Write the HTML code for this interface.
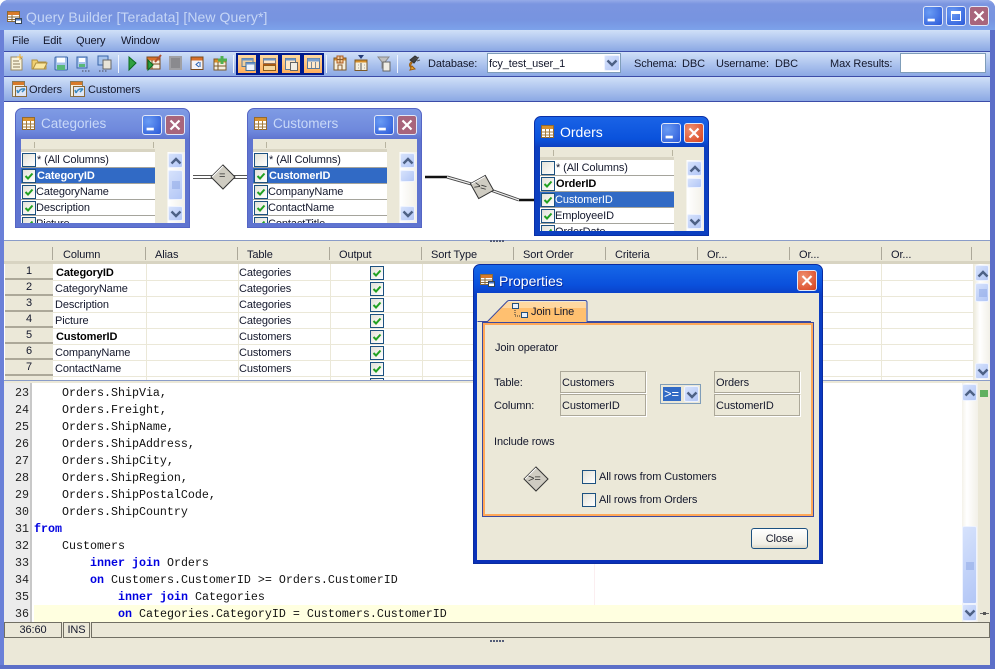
<!DOCTYPE html>
<html><head><meta charset="utf-8"><title>Query Builder</title>
<style>
html,body{margin:0;padding:0;width:995px;height:669px;overflow:hidden;background:#fff}
body{position:relative;font:11px/18px "Liberation Sans",sans-serif;color:#14182c;letter-spacing:-.1px}
div,span,svg{position:absolute;box-sizing:border-box}
span{white-space:nowrap}
.bar{left:4px;width:986px;background:linear-gradient(#d0e0f8,#8ba8e4)}
.tb{width:22px;height:22px;top:53px;background:linear-gradient(#ffd9a0,#ffaf5c);border:2px solid #001a8c}
.sep{width:1px;top:55px;height:18px;background:#f0f5ff;border-left:1px solid #8aa0d8}
.w{width:175px;height:120px;border-radius:7px 7px 0 0;background:linear-gradient(#7f9be4 0,#6e88dc 22px,#5f74d0 30px);border:1px solid #5565c4}
.w.a{background:linear-gradient(#1a63e6 0,#0a52dc 22px,#0c3fc0 30px);border-color:#0a30a8}
.w .ti{left:25px;top:6px;font-size:13.5px;line-height:18px;color:#c8d8f8;letter-spacing:0}
.w.a .ti{color:#fff;left:25px;font-size:14px}
.in{left:5px;top:30px;width:164px;height:84px;background:#ebe8d8;overflow:hidden}
.hd{left:0;top:0;width:134px;height:13px;border-bottom:3px solid #d8d4c2}
.hd:before{content:"";position:absolute;left:13px;top:3px;height:6px;width:1px;background:#b8b4a0}
.hd:after{content:"";position:absolute;left:132px;top:3px;height:6px;width:1px;background:#b8b4a0}
.r{left:0;width:134px;height:16px;background:#fff;border-bottom:1px solid #a5a49c}
.r span{left:15px;top:-1px}
.r.s{background:#316ac5}.r.s span{color:#fff}
.sb{left:134px;top:13px;width:30px;height:71px;background:linear-gradient(90deg,#ebe8d8 0,#ebe8d8 12px,#fff 13px,#f2f0e8 30px)}
.cb{width:14px;height:14px;border:1px solid #1c5180;background:linear-gradient(135deg,#e4e2d8,#fff)}
.cb svg{left:1px;top:1px}
.btn{border:1px solid #eef3ff;border-radius:2px;background:linear-gradient(135deg,#d6e2fc,#b2c6f6);outline:0}
.wb{width:20px;height:20px;border:1px solid #e2e8f8;border-radius:3px}
.blue{background:radial-gradient(circle at 30% 30%,#6a9cf4,#2a58d8)}
.red{background:#a8657c}
.redA{background:radial-gradient(circle at 30% 30%,#ee9070,#d8401c)}
.th{top:246px;height:16px}
.hdv{top:247px;width:1px;height:13px;background:#aca899}
.g{left:5px;width:968px;height:1px;background:#ebe8d8}
.v{top:264px;width:1px;height:116px;background:#ebe8d8}
.n{left:5px;width:48px;height:16px;background:#ebe8d8;border-bottom:2px solid #aca899;text-align:center;line-height:15px}
.c{height:16px}
.ln{left:5px;width:24px;text-align:right;font:11.67px/19px "Liberation Mono",monospace;color:#222;letter-spacing:0}
.co{font:11.67px/19px "Liberation Mono",monospace;color:#111;white-space:pre;letter-spacing:0}
.k{position:static;color:#0000e0;font-weight:bold}
.fd{width:86px;height:22px;border:1px solid #aca899;box-shadow:1px 1px 0 #fff;padding-left:1px;line-height:22px;background:#ebe8d8}
.fd span{position:static}
.st{top:622px;height:16px;border:1px solid #716f64;background:#ebe8d8;text-align:center;line-height:15px}
.dot{width:2px;height:2px;background:#555e78}
</style></head><body>
<svg width="0" height="0" style="position:absolute">
<defs>
<symbol id="chk" viewBox="0 0 10 10"><path d="M1.5 5l2.5 2.5L8.5 2.5" fill="none" stroke="#21a121" stroke-width="2"/></symbol>
<symbol id="up" viewBox="0 0 14 14"><path d="M2.500 9.500l4.500-4.500 4.500 4.500" fill="none" stroke="#4d6185" stroke-width="2.400"/></symbol>
<symbol id="dn" viewBox="0 0 14 14"><path d="M2.500 4.500l4.500 4.500 4.500-4.500" fill="none" stroke="#4d6185" stroke-width="2.400"/></symbol>
<symbol id="x" viewBox="0 0 20 20"><path d="M5 5l10 10M15 5L5 15" stroke="#fff" stroke-width="2.4"/></symbol>
<symbol id="min" viewBox="0 0 20 20"><rect x="4" y="13" width="8" height="3" fill="#fff"/></symbol>
<symbol id="tbl" viewBox="0 0 14 14"><rect x=".5" y=".5" width="12" height="12" fill="#fff" stroke="#946a2e"/><rect x="1" y="1" width="11" height="3" fill="#d8922e"/><path d="M.5 7h12M.5 10h12M4.5 4v9M8.5 4v9" stroke="#a67c3c"/></symbol>
<symbol id="app" viewBox="0 0 16 16"><rect x=".5" y="1.5" width="12" height="10" fill="#fff" stroke="#8a6a3a"/><rect x="1" y="2" width="11" height="3" fill="#d87a2a"/><path d="M1 7h11M1 9.500h11M5 5v6" stroke="#8a6a3a"/><rect x="8.500" y="8.500" width="6" height="5" fill="#fff" stroke="#345"/><rect x="9" y="9" width="5" height="1.500" fill="#4a78c8"/></symbol>
<symbol id="ref" viewBox="0 0 18 18"><rect x="2.500" y="1.500" width="12" height="15" fill="#f4efe0" stroke="#8a7a5a"/><rect x="3" y="2" width="11" height="3" fill="#d87a2a"/><rect x="5.500" y="6.500" width="11" height="10" fill="#dfe6f5" stroke="#8a6a3a"/><path d="M8 13q2-5 7-4M8 13l-1-3M15 9l-3 3" fill="none" stroke="#3a8ac0" stroke-width="1.500"/></symbol>
<symbol id="dia" viewBox="0 0 26 26"><path d="M13 1l12 12-12 12L1 13z" fill="#cfccc2" stroke="#333"/><path d="M13 2L2 13" stroke="#fff" fill="none"/></symbol>
</defs></svg>

<!-- window frame -->
<div style="left:0;top:0;width:995px;height:669px;background:#6a80d8;border-radius:8px 8px 0 0"></div>
<div style="left:0;top:0;width:995px;height:30px;border-radius:8px 8px 0 0;background:linear-gradient(#95abe8 0,#7b95e0 4px,#7794e0 20px,#7ca2ea 30px)"></div>
<div style="left:990px;top:30px;width:5px;height:639px;background:#5c6fc8"></div>
<div style="left:0;top:665px;width:995px;height:4px;background:#5c6fc8"></div>

<svg style="left:7px;top:10px" width="16" height="16"><use href="#app"/></svg>
<span style="left:26px;top:8px;font-size:14px;line-height:18px;color:#c6d6f6;letter-spacing:.07px">Query Builder [Teradata] [New Query*]</span>
<div class="wb blue" style="left:923px;top:6px"><svg style="left:0;top:0" width="18" height="18" viewBox="0 0 20 20"><use href="#min"/></svg></div>
<div class="wb blue" style="left:946px;top:6px"><div style="left:4px;top:4px;width:10px;height:10px;border:1px solid #fff;border-top:3px solid #fff"></div></div>
<div class="wb red" style="left:969px;top:6px"><svg style="left:0;top:0" width="18" height="18"><use href="#x"/></svg></div>

<!-- menu -->
<div class="bar" style="top:30px;height:21px"></div>
<span style="left:12px;top:32px">File</span><span style="left:43px;top:32px">Edit</span><span style="left:76px;top:32px">Query</span><span style="left:121px;top:32px">Window</span>
<div style="left:4px;top:51px;width:986px;height:1px;background:#3c4ca8"></div>

<!-- toolbar -->
<div class="bar" style="top:52px;height:24px"></div>
<div style="left:4px;top:76px;width:986px;height:1px;background:#3c4ca8"></div>
<div class="bar" style="top:77px;height:24px"></div>
<div style="left:4px;top:101px;width:986px;height:1px;background:#3c4ca8"></div>

<svg style="left:0;top:52px" width="430" height="24" viewBox="0 52 430 24">
<path d="M11 57h9l2 2v11H11z" fill="#f8f2da" stroke="#9a8a62"/><path d="M13 61h6M13 64h7M13 67h7" stroke="#8a7a5a"/><path d="M20 54v6M17 57h6" stroke="#f0b030"/>
<path d="M32 60h5l1 2h8v7H32z" fill="#f0d070" stroke="#b09040"/><path d="M33 69l3-6h11l-3 6z" fill="#fbe8a0" stroke="#b09040"/>
<rect x="55" y="57" width="12.500" height="13" rx="1" fill="#a8c4ec" stroke="#3864a8"/><rect x="57" y="57.500" width="8" height="5" fill="#fff"/><rect x="57" y="65" width="8" height="5" fill="#58b878"/>
<rect x="77" y="57" width="10" height="11" fill="#a8c4ec" stroke="#3864a8"/><rect x="79" y="58" width="6" height="4" fill="#fff"/><rect x="79" y="64" width="6" height="3" fill="#58b878"/><path d="M82 71h1.500M85 71h1.500M88 71h1.500" stroke="#445"/>
<rect x="98" y="56" width="10" height="9" fill="#a8c4ec" stroke="#3864a8"/><rect x="103" y="60" width="8" height="9" fill="#e8e4d8" stroke="#666"/><path d="M99 71h1.500M102 71h1.500M105 71h1.500" stroke="#445"/>
<rect x="118" y="55" width="1" height="18" fill="#f0f5ff"/>
<path d="M129 57l7 6-7 7z" fill="#30a040" stroke="#0a6a20"/>
<rect x="147" y="57" width="13" height="12" fill="#f4efe0" stroke="#7a4a1a"/><rect x="147.500" y="57.500" width="12" height="3" fill="#d8702a"/><path d="M147 64h13M152 60v9" stroke="#7a4a1a"/><path d="M148 60l5 5-5 5z" fill="#30a040" stroke="#0a6a20"/><path d="M155 62l6-7" stroke="#b05030" stroke-width="2"/>
<rect x="170" y="57" width="11" height="12" fill="#8a8a8e" stroke="#a0a0a4" stroke-width="2"/>
<rect x="191" y="57" width="12" height="12.500" fill="#f4f4f8" stroke="#7a4a1a"/><rect x="191.500" y="57.500" width="11" height="3" fill="#d8702a"/><path d="M199 62l-3 2.500 3 2.500M200 62v5" fill="none" stroke="#2860b0"/>
<rect x="214" y="59" width="12" height="11" fill="#f4efe0" stroke="#7a5a2a"/><rect x="214.500" y="59.500" width="11" height="3" fill="#d8902a"/><path d="M214 66h12M218 62v8" stroke="#7a5a2a"/><path d="M222 56v8M218 60h9" stroke="#50b050" stroke-width="3"/>
<rect x="233" y="55" width="1" height="18" fill="#f0f5ff"/>
</svg>
<div class="tb" style="left:236px"></div><div class="tb" style="left:258px"></div><div class="tb" style="left:280px"></div><div class="tb" style="left:302px"></div>
<svg style="left:236px;top:53px" width="90" height="22" viewBox="236 53 90 22">
<rect x="242" y="58.500" width="11" height="8" fill="#f0d0a0" stroke="#5a7a9a"/><rect x="242" y="58.500" width="11" height="2" fill="#6a94c8"/><rect x="246" y="62.500" width="9" height="8" fill="#f0f4fc" stroke="#3a6a98"/><rect x="246" y="62.500" width="9" height="2" fill="#6a94c8"/>
<rect x="263.500" y="58.500" width="12" height="5" fill="#ffe8c8" stroke="#8a7a70"/><rect x="263.500" y="58.500" width="12" height="2" fill="#6a94c8"/><rect x="263.500" y="65.500" width="12" height="5" fill="#f4d8a0" stroke="#8a5a1a"/><path d="M263 64.500h13" stroke="#b05a10" stroke-width="1.500"/>
<rect x="285.500" y="58.500" width="10" height="11" fill="#ffe8c8" stroke="#5a7a9a"/><rect x="285.500" y="58.500" width="10" height="2" fill="#6a94c8"/><rect x="290.500" y="62.500" width="7" height="8" fill="#f2efe6" stroke="#666"/>
<rect x="307.500" y="58.500" width="12" height="10" fill="#ffe8c8" stroke="#5a7a9a"/><rect x="307.500" y="58.500" width="12" height="3" fill="#7aa0d0"/><path d="M311.500 62v6M315.500 62v6" stroke="#7a8a9a"/>
</svg>
<svg style="left:326px;top:52px" width="96" height="24" viewBox="326 52 96 24">
<rect x="326" y="55" width="1" height="18" fill="#f0f5ff"/>
<rect x="334" y="58" width="12" height="12" fill="#f4efe0" stroke="#7a5a2a"/><rect x="334.500" y="58.500" width="11" height="2" fill="#d8902a"/><rect x="337" y="56" width="6" height="7" fill="#f0c898" stroke="#b05a20"/><path d="M340 56v7M337 59.500h6M338 65h4v5h-4z" stroke="#8a5a2a" fill="none"/>
<rect x="355" y="60" width="12" height="10.500" fill="#f4efe0" stroke="#7a5a2a"/><rect x="355.500" y="60.500" width="11" height="2" fill="#d8902a"/><path d="M358 55h6l-3 4z" fill="#243c78"/><path d="M361 63v7M358 65h.5M358 68h.5M364 65h.5M364 68h.5" stroke="#555"/>
<path d="M378 57h11l-4 5v5l-3 1v-6z" fill="#c0c0c0" stroke="#888"/><rect x="383" y="62" width="7" height="9" fill="#f0ede4" stroke="#666"/>
<rect x="397" y="55" width="1" height="18" fill="#f0f5ff"/>
<path d="M410 60l5-4 3 2-4 5z" fill="#444" stroke="#333"/><path d="M416 59l3-2M417 61l3-1" stroke="#555"/><path d="M411 62q-3 3 0 6l-1 2 5-1-3-3-1 1q-1-2 1-4z" fill="#f0a830" stroke="#a06010"/>
</svg>
<span style="left:428px;top:55px">Database:</span>
<div style="left:487px;top:53px;width:134px;height:20px;background:#fff;border:1px solid #7f9db9"><span style="left:1px;top:1px">fcy_test_user_1</span>
<div class="btn" style="left:116px;top:1px;width:16px;height:16px"><svg style="left:0;top:0" width="14" height="14"><use href="#dn"/></svg></div></div>
<span style="left:634px;top:55px">Schema:</span><span style="left:682px;top:55px">DBC</span>
<span style="left:716px;top:55px">Username:</span><span style="left:775px;top:55px">DBC</span>
<span style="left:830px;top:55px">Max Results:</span>
<div style="left:900px;top:53px;width:86px;height:20px;background:#fff;border:1px solid #7f9db9"></div>

<svg style="left:10px;top:80px" width="18" height="18"><use href="#ref"/></svg><span style="left:29px;top:81px">Orders</span>
<svg style="left:68px;top:80px" width="18" height="18"><use href="#ref"/></svg><span style="left:88px;top:81px">Customers</span>

<!-- diagram -->
<div style="left:4px;top:102px;width:986px;height:138px;background:#fff"></div>
<svg style="left:185px;top:165px" width="360" height="45">
<path d="M8 10.500h55M8 13.500h55" stroke="#555" fill="none"/>
<path d="M240 12h22M334 35h16" fill="none" stroke="#111" stroke-width="2.500"/>
<path d="M262 12l35 10 37 13" fill="none" stroke="#444" stroke-width="3"/>
<path d="M262 12l35 10 37 13" fill="none" stroke="#eee" stroke-width="1.200"/>
</svg>
<svg style="left:210px;top:164px" width="26" height="26"><use href="#dia"/></svg>
<span style="left:219px;top:167px;color:#333">=</span>
<svg style="left:469px;top:174px;transform:rotate(16deg)" width="26" height="26"><use href="#dia"/></svg>
<span style="left:474px;top:178px;color:#333;transform:rotate(15deg)">&gt;=</span>

<!-- Categories -->
<div class="w" style="left:15px;top:108px">
<svg style="left:6px;top:8px" width="14" height="14"><use href="#tbl"/></svg><span class="ti">Categories</span>
<div class="wb blue" style="left:126px;top:6px"><svg style="left:0;top:0" width="18" height="18"><use href="#min"/></svg></div>
<div class="wb red" style="left:149px;top:6px"><svg style="left:0;top:0" width="18" height="18"><use href="#x"/></svg></div>
<div class="in"><div class="hd"></div>
<div class="r" style="top:13px"><span style="left:16px">* (All Columns)</span><div class="cb" style="left:1px;top:1px"></div></div>
<div class="r s" style="top:29px"><span style="font-weight:bold;left:16px">CategoryID</span><div class="cb" style="left:1px;top:1px"><svg width="10" height="10"><use href="#chk"/></svg></div></div>
<div class="r" style="top:45px"><span>CategoryName</span><div class="cb" style="left:1px;top:1px"><svg width="10" height="10"><use href="#chk"/></svg></div></div>
<div class="r" style="top:61px"><span>Description</span><div class="cb" style="left:1px;top:1px"><svg width="10" height="10"><use href="#chk"/></svg></div></div>
<div class="r" style="top:77px"><span>Picture</span><div class="cb" style="left:1px;top:1px"><svg width="10" height="10"><use href="#chk"/></svg></div></div>
<div class="sb"><div class="btn" style="left:13px;top:1px;width:15px;height:15px"><svg style="left:0;top:0" width="14" height="14"><use href="#up"/></svg></div>
<div class="btn" style="left:13px;top:18px;width:15px;height:30px"><svg style="left:3px;top:10px" width="8" height="8"><path d="M0 1h8M0 3h8M0 5h8M0 7h8" stroke="#8aa4e4"/></svg></div>
<div class="btn" style="left:13px;top:54px;width:15px;height:15px"><svg style="left:0;top:0" width="14" height="14"><use href="#dn"/></svg></div></div>
</div></div>

<!-- Customers -->
<div class="w" style="left:247px;top:108px">
<svg style="left:6px;top:8px" width="14" height="14"><use href="#tbl"/></svg><span class="ti">Customers</span>
<div class="wb blue" style="left:126px;top:6px"><svg style="left:0;top:0" width="18" height="18"><use href="#min"/></svg></div>
<div class="wb red" style="left:149px;top:6px"><svg style="left:0;top:0" width="18" height="18"><use href="#x"/></svg></div>
<div class="in"><div class="hd"></div>
<div class="r" style="top:13px"><span style="left:16px">* (All Columns)</span><div class="cb" style="left:1px;top:1px"></div></div>
<div class="r s" style="top:29px"><span style="font-weight:bold;left:16px">CustomerID</span><div class="cb" style="left:1px;top:1px"><svg width="10" height="10"><use href="#chk"/></svg></div></div>
<div class="r" style="top:45px"><span>CompanyName</span><div class="cb" style="left:1px;top:1px"><svg width="10" height="10"><use href="#chk"/></svg></div></div>
<div class="r" style="top:61px"><span>ContactName</span><div class="cb" style="left:1px;top:1px"><svg width="10" height="10"><use href="#chk"/></svg></div></div>
<div class="r" style="top:77px"><span>ContactTitle</span><div class="cb" style="left:1px;top:1px"><svg width="10" height="10"><use href="#chk"/></svg></div></div>
<div class="sb"><div class="btn" style="left:13px;top:1px;width:15px;height:15px"><svg style="left:0;top:0" width="14" height="14"><use href="#up"/></svg></div>
<div class="btn" style="left:13px;top:18px;width:15px;height:12px"></div>
<div class="btn" style="left:13px;top:54px;width:15px;height:15px"><svg style="left:0;top:0" width="14" height="14"><use href="#dn"/></svg></div></div>
</div></div>

<!-- Orders -->
<div class="w a" style="left:534px;top:116px">
<svg style="left:6px;top:8px" width="14" height="14"><use href="#tbl"/></svg><span class="ti">Orders</span>
<div class="wb blue" style="left:126px;top:6px"><svg style="left:0;top:0" width="18" height="18"><use href="#min"/></svg></div>
<div class="wb redA" style="left:149px;top:6px"><svg style="left:0;top:0" width="18" height="18"><use href="#x"/></svg></div>
<div class="in"><div class="hd"></div>
<div class="r" style="top:13px"><span style="left:16px">* (All Columns)</span><div class="cb" style="left:1px;top:1px"></div></div>
<div class="r" style="top:29px"><span style="font-weight:bold;color:#000;left:16px">OrderID</span><div class="cb" style="left:1px;top:1px"><svg width="10" height="10"><use href="#chk"/></svg></div></div>
<div class="r s" style="top:45px"><span>CustomerID</span><div class="cb" style="left:1px;top:1px"><svg width="10" height="10"><use href="#chk"/></svg></div></div>
<div class="r" style="top:61px"><span>EmployeeID</span><div class="cb" style="left:1px;top:1px"><svg width="10" height="10"><use href="#chk"/></svg></div></div>
<div class="r" style="top:77px"><span>OrderDate</span><div class="cb" style="left:1px;top:1px"><svg width="10" height="10"><use href="#chk"/></svg></div></div>
<div class="sb"><div class="btn" style="left:13px;top:1px;width:15px;height:15px"><svg style="left:0;top:0" width="14" height="14"><use href="#up"/></svg></div>
<div class="btn" style="left:13px;top:18px;width:15px;height:10px"></div>
<div class="btn" style="left:13px;top:54px;width:15px;height:15px"><svg style="left:0;top:0" width="14" height="14"><use href="#dn"/></svg></div></div>
</div></div>

<!-- splitter -->
<div style="left:4px;top:240px;width:986px;height:4px;background:#ebe8d8;border-top:1px solid #8a9cc8"></div>
<div class="dot" style="left:490px;top:240px"></div><div class="dot" style="left:493px;top:240px"></div><div class="dot" style="left:496px;top:240px"></div><div class="dot" style="left:499px;top:240px"></div><div class="dot" style="left:502px;top:240px"></div>

<!-- grid -->
<div style="left:4px;top:244px;width:986px;height:20px;background:#ebe8d8;border-bottom:3px solid #d8d4c2"></div>
<div style="left:4px;top:264px;width:986px;height:116px;background:#fff"></div>
<span class="th" style="left:63px">Column</span><span class="th" style="left:155px">Alias</span><span class="th" style="left:247px">Table</span><span class="th" style="left:339px">Output</span><span class="th" style="left:431px">Sort Type</span><span class="th" style="left:523px">Sort Order</span><span class="th" style="left:615px">Criteria</span><span class="th" style="left:707px">Or...</span><span class="th" style="left:799px">Or...</span><span class="th" style="left:891px">Or...</span>
<div class="hdv" style="left:52px"></div><div class="hdv" style="left:145px"></div><div class="hdv" style="left:237px"></div><div class="hdv" style="left:329px"></div><div class="hdv" style="left:421px"></div><div class="hdv" style="left:513px"></div><div class="hdv" style="left:605px"></div><div class="hdv" style="left:697px"></div><div class="hdv" style="left:789px"></div><div class="hdv" style="left:881px"></div><div class="hdv" style="left:971px"></div>
<div class="v" style="left:146px"></div><div class="v" style="left:238px"></div><div class="v" style="left:330px"></div><div class="v" style="left:422px"></div><div class="v" style="left:514px"></div><div class="v" style="left:606px"></div><div class="v" style="left:698px"></div><div class="v" style="left:790px"></div><div class="v" style="left:881px"></div>
<div class="g" style="top:280px"></div><div class="g" style="top:296px"></div><div class="g" style="top:312px"></div><div class="g" style="top:328px"></div><div class="g" style="top:344px"></div><div class="g" style="top:360px"></div><div class="g" style="top:376px"></div>
<div class="n" style="top:264px">1</div><div class="n" style="top:280px">2</div><div class="n" style="top:296px">3</div><div class="n" style="top:312px">4</div><div class="n" style="top:328px">5</div><div class="n" style="top:344px">6</div><div class="n" style="top:360px">7</div><div class="n" style="top:376px;height:4px;border:0"></div>
<span class="c" style="left:56px;top:264px;font-weight:bold;color:#000">CategoryID</span><span class="c" style="left:239px;top:264px">Categories</span>
<span class="c" style="left:55px;top:280px">CategoryName</span><span class="c" style="left:239px;top:280px">Categories</span>
<span class="c" style="left:55px;top:296px">Description</span><span class="c" style="left:239px;top:296px">Categories</span>
<span class="c" style="left:55px;top:312px">Picture</span><span class="c" style="left:239px;top:312px">Categories</span>
<span class="c" style="left:56px;top:328px;font-weight:bold;color:#000">CustomerID</span><span class="c" style="left:239px;top:328px">Customers</span>
<span class="c" style="left:55px;top:344px">CompanyName</span><span class="c" style="left:239px;top:344px">Customers</span>
<span class="c" style="left:55px;top:360px">ContactName</span><span class="c" style="left:239px;top:360px">Customers</span>
<div class="cb" style="left:370px;top:266px"><svg width="10" height="10"><use href="#chk"/></svg></div>
<div class="cb" style="left:370px;top:282px"><svg width="10" height="10"><use href="#chk"/></svg></div>
<div class="cb" style="left:370px;top:298px"><svg width="10" height="10"><use href="#chk"/></svg></div>
<div class="cb" style="left:370px;top:314px"><svg width="10" height="10"><use href="#chk"/></svg></div>
<div class="cb" style="left:370px;top:330px"><svg width="10" height="10"><use href="#chk"/></svg></div>
<div class="cb" style="left:370px;top:346px"><svg width="10" height="10"><use href="#chk"/></svg></div>
<div class="cb" style="left:370px;top:362px"><svg width="10" height="10"><use href="#chk"/></svg></div>
<div class="cb" style="left:370px;top:378px;height:2px;border-bottom:0"></div>
<div style="left:973px;top:264px;width:17px;height:116px;background:linear-gradient(90deg,#ebe8d8,#fff 40%,#f2f0e8)"></div>
<div class="btn" style="left:975px;top:265px;width:14px;height:16px"><svg style="left:0;top:1px" width="14" height="14"><use href="#up"/></svg></div>
<div class="btn" style="left:975px;top:283px;width:14px;height:19px"><svg style="left:3px;top:5px" width="8" height="8"><path d="M0 1h8M0 3h8M0 5h8M0 7h8" stroke="#8aa4e4"/></svg></div>
<div class="btn" style="left:975px;top:363px;width:14px;height:16px"><svg style="left:0;top:1px" width="14" height="14"><use href="#dn"/></svg></div>
<div style="left:4px;top:380px;width:986px;height:3px;background:#ebe8d8;border-top:1px solid #8a9cc8"></div>

<!-- editor -->
<div style="left:4px;top:383px;width:986px;height:239px;background:#fff"></div>
<div style="left:4px;top:383px;width:28px;height:239px;background:#ececec;border-right:2px solid #c8c8c8"></div>
<div style="left:594px;top:383px;width:1px;height:222px;background:#fbeef0"></div>
<div style="left:34px;top:605px;width:928px;height:17px;background:#ffffe0"></div>
<div class="ln" style="top:384px">23</div><div class="ln" style="top:401px">24</div><div class="ln" style="top:418px">25</div><div class="ln" style="top:435px">26</div><div class="ln" style="top:452px">27</div><div class="ln" style="top:469px">28</div><div class="ln" style="top:486px">29</div><div class="ln" style="top:503px">30</div><div class="ln" style="top:520px">31</div><div class="ln" style="top:537px">32</div><div class="ln" style="top:554px">33</div><div class="ln" style="top:571px">34</div><div class="ln" style="top:588px">35</div><div class="ln" style="top:605px">36</div>
<span class="co" style="left:62px;top:384px">Orders.ShipVia,</span>
<span class="co" style="left:62px;top:401px">Orders.Freight,</span>
<span class="co" style="left:62px;top:418px">Orders.ShipName,</span>
<span class="co" style="left:62px;top:435px">Orders.ShipAddress,</span>
<span class="co" style="left:62px;top:452px">Orders.ShipCity,</span>
<span class="co" style="left:62px;top:469px">Orders.ShipRegion,</span>
<span class="co" style="left:62px;top:486px">Orders.ShipPostalCode,</span>
<span class="co" style="left:62px;top:503px">Orders.ShipCountry</span>
<span class="co" style="left:34px;top:520px"><span class="k">from</span></span>
<span class="co" style="left:62px;top:537px">Customers</span>
<span class="co" style="left:90px;top:554px"><span class="k">inner join</span> Orders</span>
<span class="co" style="left:90px;top:571px"><span class="k">on</span> Customers.CustomerID &gt;= Orders.CustomerID</span>
<span class="co" style="left:118px;top:588px"><span class="k">inner join</span> Categories</span>
<span class="co" style="left:118px;top:605px"><span class="k">on</span> Categories.CategoryID = Customers.CustomerID</span>
<div style="left:962px;top:383px;width:16px;height:239px;background:linear-gradient(90deg,#f4f2ea,#fff 30%,#f2f0e8)"></div>
<div style="left:978px;top:383px;width:12px;height:239px;background:#ebe8d8"></div>
<div class="btn" style="left:962px;top:384px;width:15px;height:17px"><svg style="left:0;top:1px" width="14" height="14"><use href="#up"/></svg></div>
<div class="btn" style="left:962px;top:526px;width:15px;height:78px"><svg style="left:3px;top:35px" width="8" height="8"><path d="M0 1h8M0 3h8M0 5h8M0 7h8" stroke="#8aa4e4"/></svg></div>
<div class="btn" style="left:962px;top:604px;width:15px;height:17px"><svg style="left:0;top:1px" width="14" height="14"><use href="#dn"/></svg></div>
<div style="left:980px;top:390px;width:8px;height:7px;background:#60b060"></div>
<div style="left:980px;top:613px;width:9px;height:1px;background:#666"></div><div style="left:983px;top:612px;width:3px;height:3px;background:#555"></div>

<!-- status -->
<div style="left:4px;top:622px;width:986px;height:43px;background:#ebe8d8"></div>
<div class="st" style="left:4px;width:58px">36:60</div><div class="st" style="left:63px;width:27px">INS</div><div class="st" style="left:91px;width:899px"></div>
<div class="dot" style="left:490px;top:640px"></div><div class="dot" style="left:493px;top:640px"></div><div class="dot" style="left:496px;top:640px"></div><div class="dot" style="left:499px;top:640px"></div><div class="dot" style="left:502px;top:640px"></div>

<!-- dialog -->
<div style="left:473px;top:264px;width:350px;height:300px;border-radius:7px 7px 0 0;background:linear-gradient(#1668e8 0,#0a50dc 20px,#0a3ec4 30px,#0a30b8);border:1px solid #0a2ca0"></div>
<div style="left:477px;top:293px;width:342px;height:267px;background:#ebe8d8"></div>
<svg style="left:480px;top:273px" width="16" height="16"><use href="#app"/></svg>
<span style="left:499px;top:272px;font-size:14px;line-height:18px;color:#fff;text-shadow:1px 1px 0 #0a2ca0;letter-spacing:0">Properties</span>
<div class="wb redA" style="left:797px;top:270px;height:21px"><svg style="left:0;top:0" width="18" height="19"><use href="#x"/></svg></div>
<svg style="left:477px;top:300px" width="340" height="24"><path d="M11 21.500L30 2h79v20H11z" fill="#ffc070"/><path d="M30 2h79v6H25z" fill="#ffd8a0"/><path d="M.5 21.500h10L30 1.500q1-1 2-1h76q2 0 2 2v19h224" fill="none" stroke="#3a4aa0"/></svg>
<svg style="left:512px;top:303px" width="16" height="16"><rect x=".5" y=".5" width="6" height="5" fill="#e8f0fc" stroke="#24507a"/><rect x="9.500" y="9.500" width="6" height="5" fill="#e8f0fc" stroke="#24507a"/><path d="M3 7v6h5" stroke="#333" stroke-dasharray="1 1" fill="none"/></svg>
<span style="left:531px;top:303px">Join Line</span>
<div style="left:482px;top:322px;width:332px;height:195px;border:1px solid #3a4aa0;box-shadow:inset 0 0 0 2px #ffa858"></div>
<span style="left:495px;top:339px">Join operator</span>
<span style="left:494px;top:374px">Table:</span><span style="left:494px;top:397px">Column:</span>
<div class="fd" style="left:560px;top:371px"><span>Customers</span></div>
<div class="fd" style="left:560px;top:394px"><span>CustomerID</span></div>
<div class="fd" style="left:714px;top:371px"><span>Orders</span></div>
<div class="fd" style="left:714px;top:394px"><span>CustomerID</span></div>
<div style="left:660px;top:384px;width:41px;height:20px;border:1px solid #7f9db9;background:#ebe8d8"></div>
<div style="left:663px;top:387px;width:18px;height:14px;background:#316ac5;color:#fff;line-height:14px;font-size:13px;padding-left:1px">&gt;=</div>
<div class="btn" style="left:684px;top:386px;width:15px;height:16px"><svg style="left:0;top:1px" width="14" height="14"><use href="#dn"/></svg></div>
<span style="left:494px;top:433px">Include rows</span>
<svg style="left:522.500px;top:466px" width="26" height="26"><use href="#dia"/></svg>
<span style="left:528px;top:470px;color:#333">&gt;=</span>
<div class="cb" style="left:582px;top:470px"></div><span style="left:599px;top:468px">All rows from Customers</span>
<div class="cb" style="left:582px;top:493px"></div><span style="left:599px;top:491px">All rows from Orders</span>
<div style="left:751px;top:528px;width:57px;height:21px;border:1px solid #1c5180;border-radius:3px;background:linear-gradient(#fff,#f0eee4 80%,#dcd8c8);text-align:center;line-height:20px">Close</div>
</body></html>
